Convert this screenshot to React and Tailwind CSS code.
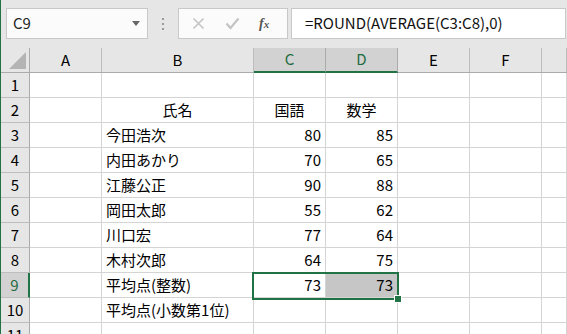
const font = { fontFamily: '"Noto Sans CJK JP", "Liberation Sans", sans-serif' };

const cols = [
    { key: 'A', w: 'w-[72px]' },
    { key: 'B', w: 'w-[152px]' },
    { key: 'C', w: 'w-[72px]', sel: true },
    { key: 'D', w: 'w-[72px]', sel: true },
    { key: 'E', w: 'w-[72px]' },
    { key: 'F', w: 'w-[72px]' },
    { key: 'G', w: 'flex-1' },
];

const rows = [
    { n: 1 },
    { n: 2, B: '氏名', C: '国語', D: '数学', center: true },
    { n: 3, B: '今田浩次', C: 80, D: 85 },
    { n: 4, B: '内田あかり', C: 70, D: 65 },
    { n: 5, B: '江藤公正', C: 90, D: 88 },
    { n: 6, B: '岡田太郎', C: 55, D: 62 },
    { n: 7, B: '川口宏', C: 77, D: 64 },
    { n: 8, B: '木村次郎', C: 64, D: 75 },
    { n: 9, B: '平均点(整数)', C: 73, D: 73, sel: true },
    { n: 10, B: '平均点(小数第1位)' },
    { n: 11 },
];

const Cell = ({ col, row }) => {
    const v = row[col.key];
    let align = 'justify-start pl-[4px]';
    if (typeof v === 'number') align = 'justify-end pr-[4px]';
    if (row.center) align = 'justify-center';
    const fill = row.sel && col.key === 'D' ? 'bg-[#c6c6c6]' : 'bg-white';
    return (
        <div className={`${col.w} h-[25px] shrink-0 flex items-center border-r border-b border-[#d4d4d4] text-[15px] text-black whitespace-nowrap ${align} ${fill}`}>
            {v}
        </div>
    );
};

export default function App() {
    return (
        <div className="w-[567px] h-[334px] overflow-hidden bg-white border-l border-[#217346]" style={font}>
            {/* formula bar */}
            <div className="h-[48px] bg-[#e6e6e6] flex items-start pt-[8px]">
                <div className="ml-[5px] w-[142px] h-[31px] bg-[#fbfbfb] border border-[#c8c8c8] flex items-center justify-between pl-[6px] pr-[7px]">
                    <span className="text-[15px] text-[#222]">C9</span>
                    <svg width="8" height="5" viewBox="0 0 8 5"><path d="M0 0h8L4 5z" fill="#666" /></svg>
                </div>
                <div className="w-[30px] h-[31px] flex flex-col items-center justify-center gap-[3px]">
                    <span className="w-[2px] h-[2px] bg-[#9a9a9a]" />
                    <span className="w-[2px] h-[2px] bg-[#9a9a9a]" />
                    <span className="w-[2px] h-[2px] bg-[#9a9a9a]" />
                </div>
                <div className="w-[110px] h-[31px] bg-[#fbfbfb] border border-[#c8c8c8] flex items-center pl-[13px] gap-[20px]">
                    <svg width="13" height="13" viewBox="0 0 13 13"><path d="M1.5 1.5l10 10M11.5 1.5l-10 10" stroke="#c4c4c4" strokeWidth="1.6" /></svg>
                    <svg width="15" height="13" viewBox="0 0 15 13"><path d="M1.5 6.5l4 4.5L13.5 1.5" stroke="#c4c4c4" strokeWidth="2.2" fill="none" /></svg>
                    <span className="text-[14px] italic font-bold text-[#555] -ml-[1px]" style={{ fontFamily: '"Liberation Serif", serif' }}>f<span className="text-[11px]">x</span></span>
                </div>
                <div className="ml-[3px] w-[275px] h-[31px] bg-white border border-[#c8c8c8] flex items-center pl-[13px]">
                    <span className="text-[15px] text-[#111]">=ROUND(AVERAGE(C3:C8),0)</span>
                </div>
            </div>

            {/* grid */}
            <div className="relative">
                <div className="flex h-[25px] bg-[#e6e6e6] border-b border-[#ababab]">
                    <div className="w-[29px] shrink-0 border-r border-[#ababab] flex items-end justify-end pr-[3px] pb-[3px]">
                        <svg width="17" height="17" viewBox="0 0 17 17"><path d="M17 0V17H0z" fill="#b4b4b4" /></svg>
                    </div>
                    {cols.map(c => (
                        <div
                            key={c.key}
                            className={`${c.w} shrink-0 flex items-center justify-center text-[15px] border-r ${c.sel ? 'bg-[#d2d2d2] text-[#1e6b40] border-b-2 border-b-[#217346] border-r-[#ababab] -mb-[1px]' : 'text-black border-[#bdbdbd]'}`}
                        >
                            {c.key === 'G' ? '' : c.key}
                        </div>
                    ))}
                </div>
                {rows.map(r => (
                    <div key={r.n} className="flex">
                        <div className={`w-[29px] shrink-0 h-[25px] flex items-center justify-center text-[15px] border-b border-[#bdbdbd] ${r.sel ? 'bg-[#d2d2d2] text-[#1e6b40] border-r-2 border-r-[#217346]' : 'bg-[#e6e6e6] text-black border-r border-r-[#ababab]'}`}>
                            {r.n}
                        </div>
                        {cols.map(c => <Cell key={c.key} col={c} row={r} />)}
                    </div>
                ))}

                {/* selection C9:D9 */}
                <div className="absolute left-[251px] top-[224px] w-[147px] h-[28px] border-2 border-[#217346]" />
                <div className="absolute left-[393px] top-[247px] w-[8px] h-[8px] bg-[#217346] border border-white" />
            </div>
        </div>
    );
}
